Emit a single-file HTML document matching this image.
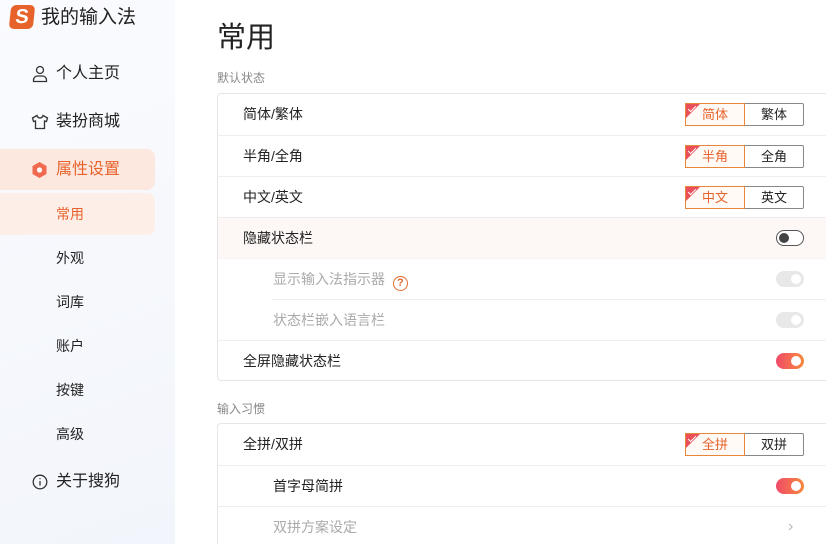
<!DOCTYPE html><html style="overflow:hidden;height:544px"><head><meta charset="utf-8"><style>
*{margin:0;padding:0;box-sizing:border-box}
body{width:826px;height:544px;overflow:hidden;background:#fff;font-family:"Liberation Sans","Noto Sans CJK SC",sans-serif;position:relative;color:#222}
.side{position:absolute;left:0;top:0;width:175px;height:544px;background:linear-gradient(160deg,#fafbfe,#f2f5fb)}
.abs{position:absolute}
.logo{left:10px;top:5px;width:24px;height:24px;background:#e8632c;border-radius:5px;transform:skewX(-6deg);color:#fff;font-weight:bold;font-size:20px;text-align:center;line-height:24px}
.nav{position:absolute;left:56px;font-size:16px;color:#222;line-height:20px}
.sub{position:absolute;left:56px;font-size:14px;color:#222;line-height:18px}
.hl{position:absolute;left:0;width:155px;background:#fde8e0;border-radius:0 8px 8px 0}
.main{position:absolute;left:217px}
.lbl{position:absolute;left:217px;font-size:12px;color:#888}
.card{position:absolute;left:217px;width:620px;border:1px solid #e6e6e6;border-radius:4px;background:#fff}
.row{position:absolute;left:0;right:0;height:41px;border-top:1px solid #eee;font-size:14px;line-height:40px}
.row span{position:absolute;left:25px}
.row.in span{left:55px}
.seg{position:absolute;left:467px;top:9px;width:119px;height:23px;border:1px solid #888;border-radius:2px;font-size:13px;line-height:21px;display:flex}
.seg div{flex:1;text-align:center}
.seg .on{border:1px solid #e8863a;margin:-1px 0 -1px -1px;color:#e8632c;position:relative;background:#fffaf6}
.seg .on:before{content:"";position:absolute;left:0;top:0;border-top:14px solid #e9505a;border-right:14px solid transparent}
.seg .on:after{content:"";position:absolute;left:2px;top:2px;width:7px;height:3px;border-left:1.5px solid #fff;border-bottom:1.5px solid #fff;transform:rotate(-45deg)}
.tg{position:absolute;left:558px;top:12px;width:28px;height:16px;border-radius:8px}
.tg:after{content:"";position:absolute;top:3px;width:10px;height:10px;border-radius:50%}
.off{border:1.5px solid #555;background:#fff}.off:after{left:2px;top:1.5px;background:#444}
.dis{background:#e8e8e8}.dis:after{right:3px;background:#fff}
.onn{background:linear-gradient(90deg,#f14a6a,#f58a3c)}.onn:after{right:3px;background:#fff}
</style></head><body>
<div class="side">
<div class="abs logo">S</div>
<div class="abs" style="left:41px;top:6px;font-size:19px;line-height:24px">我的输入法</div>
<svg class="abs" style="left:32px;top:65px" width="16" height="18" viewBox="0 0 16 18" fill="none" stroke="#333" stroke-width="1.3"><circle cx="8" cy="5" r="3.5"/><path d="M1.5 16.5v-1.5a4 4 0 0 1 4-4h5a4 4 0 0 1 4 4v1.5z"/></svg>
<div class="nav" style="top:64px">个人主页</div>
<svg class="abs" style="left:31px;top:114px" width="18" height="16" viewBox="0 0 18 16" fill="none" stroke="#333" stroke-width="1.3"><path d="M6 1.5L1.5 4l1 3.5 2-.5V14.5h9V7l2 .5 1-3.5L12 1.5c-.5 1.5-1.5 2.5-3 2.5S6.5 3 6 1.5z"/></svg>
<div class="nav" style="top:112px">装扮商城</div>
<div class="hl" style="top:149px;height:41px"></div>
<svg class="abs" style="left:31px;top:161px" width="17" height="18" viewBox="0 0 17 18"><path d="M8.5 1l7 4v8l-7 4-7-4V5z" fill="#f06a4f"/><circle cx="8.5" cy="9" r="2.6" fill="#fff"/></svg>
<div class="nav" style="top:160px;color:#e8632c">属性设置</div>
<div class="hl" style="top:193px;height:42px;background:#fdeee8"></div>
<div class="sub" style="top:205px;color:#e8632c">常用</div>
<div class="sub" style="top:249px">外观</div>
<div class="sub" style="top:293px">词库</div>
<div class="sub" style="top:337px">账户</div>
<div class="sub" style="top:381px">按键</div>
<div class="sub" style="top:425px">高级</div>
<svg class="abs" style="left:32px;top:474px" width="16" height="16" viewBox="0 0 16 16" fill="none" stroke="#333" stroke-width="1.3"><circle cx="8" cy="8" r="6.8"/><path d="M8 7v4.5M8 4.3v1"/></svg>
<div class="nav" style="top:472px">关于搜狗</div>
</div>
<div class="main" style="top:20px;font-size:29px;line-height:36px">常用</div>
<div class="lbl" style="top:69px">默认状态</div>
<div class="card" style="top:93px;height:288px">
<div class="row" style="top:0;border:0"><span>简体/繁体</span><div class="seg"><div class="on">简体</div><div>繁体</div></div></div>
<div class="row" style="top:41px"><span>半角/全角</span><div class="seg"><div class="on">半角</div><div>全角</div></div></div>
<div class="row" style="top:82px"><span>中文/英文</span><div class="seg"><div class="on">中文</div><div>英文</div></div></div>
<div class="row" style="top:123px;background:#fdf7f5"><span>隐藏状态栏</span><div class="tg off"></div></div>
<div class="row in" style="top:164px;color:#aaa;border-top:1px solid #f3f3f3"><span>显示输入法指示器 <b style="display:inline-block;width:15px;height:15px;border:1.3px solid #e06a2a;border-radius:50%;color:#e06a2a;font-size:11px;line-height:13px;text-align:center;margin-left:4px;vertical-align:-2px">?</b></span><div class="tg dis"></div></div>
<div class="row in" style="top:205px;color:#aaa;border-top:1px solid #eee;left:54px"><span style="left:1px">状态栏嵌入语言栏</span><div class="tg dis" style="left:504px"></div></div>
<div class="row" style="top:246px"><span>全屏隐藏状态栏</span><div class="tg onn"></div></div>
</div>
<div class="lbl" style="top:400px">输入习惯</div>
<div class="card" style="top:423px;height:130px">
<div class="row" style="top:0;border:0"><span>全拼/双拼</span><div class="seg"><div class="on">全拼</div><div>双拼</div></div></div>
<div class="row in" style="top:41px"><span style="color:#222">首字母简拼</span><div class="tg onn"></div></div>
<div class="row in" style="top:82px;color:#aaa"><span>双拼方案设定</span><span style="left:570px;color:#bbb;font-size:16px">›</span></div>
</div>
</body></html>
